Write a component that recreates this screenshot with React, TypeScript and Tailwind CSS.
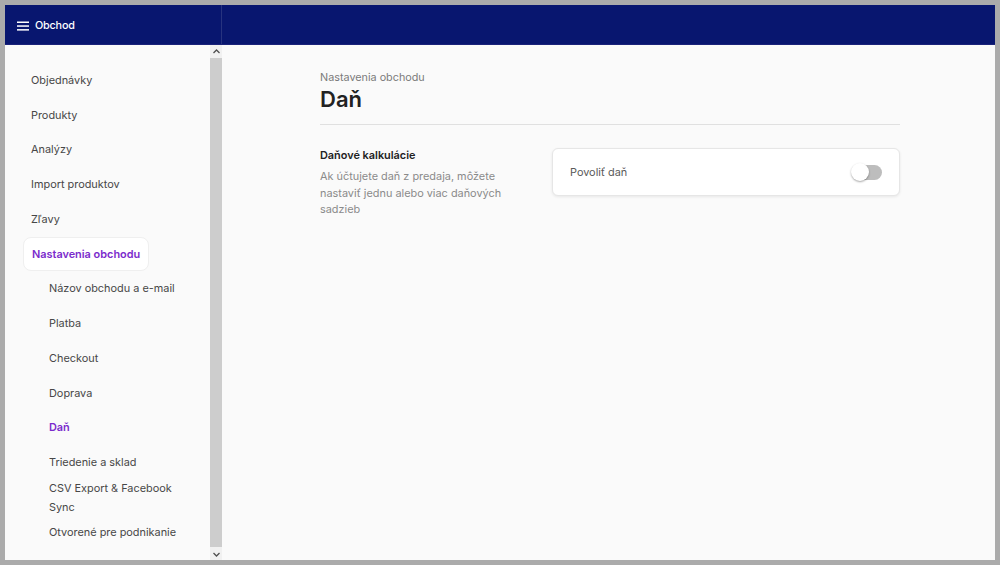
import React from "react";

const mainItems = ["Objednávky", "Produkty", "Analýzy", "Import produktov", "Zľavy"];
const subItems = [
  "Názov obchodu a e-mail",
  "Platba",
  "Checkout",
  "Doprava",
  "Daň",
  "Triedenie a sklad",
  "CSV Export & Facebook Sync",
  "Otvorené pre podnikanie",
];

export default function App() {
  return (
    <div
      className="w-[1000px] h-[565px] bg-[#ababab] p-[5px] overflow-hidden"
      style={{ fontFamily: "Inter, 'Noto Sans', sans-serif" }}
    >
      <div className="flex flex-col h-full bg-[#fafafa]">
        {/* header */}
        <div className="flex h-[40px] bg-[#08166f] border-b border-[#1b237a] shrink-0">
          <div className="w-[217px] border-r border-[#27337f] flex items-center pl-[12px] pt-[3px] gap-[6px]">
            <svg width="12" height="10" viewBox="0 0 12 10" className="text-white">
              <rect x="0" y="0.5" width="12" height="1.5" fill="currentColor" />
              <rect x="0" y="4.3" width="12" height="1.5" fill="currentColor" />
              <rect x="0" y="8.1" width="12" height="1.5" fill="currentColor" />
            </svg>
            <span className="text-white text-[10.8px] font-medium tracking-[-0.2px]">Obchod</span>
          </div>
          <div className="flex-1" />
        </div>

        {/* body */}
        <div className="flex flex-1 min-h-0">
          {/* sidebar */}
          <div className="w-[205px] pt-[17.6px] pl-[18px] text-[10.9px] text-[#474747]">
            {mainItems.map((t) => (
              <div key={t} className="h-[34.8px] flex items-center px-[8px]">
                {t}
              </div>
            ))}
            <div className="h-[34.8px] flex items-center">
              <div className="h-[34px] flex items-center px-[8px] bg-white rounded-[8px] border border-[#efefef] text-[#7b2bcc] font-semibold">
                Nastavenia obchodu
              </div>
            </div>
            {subItems.map((t) => (
              <div
                key={t}
                className={
                  "h-[34.8px] flex items-center pl-[26px] pr-[20px] leading-[19px] " +
                  (t === "Daň" ? "text-[#7b2bcc] font-semibold" : "")
                }
              >
                <span>{t}</span>
              </div>
            ))}
          </div>

          {/* scrollbar */}
          <div className="w-[12px] flex flex-col bg-[#f1f1f1]">
            <div className="h-[12px] flex items-center justify-center">
              <svg width="7" height="5" viewBox="0 0 7 5">
                <path d="M0.5 4 L3.5 1 L6.5 4" stroke="#505050" strokeWidth="1.3" fill="none" />
              </svg>
            </div>
            <div className="flex-1 bg-[#cdcdcd] my-[1px]" />
            <div className="h-[12px] flex items-center justify-center">
              <svg width="7" height="5" viewBox="0 0 7 5">
                <path d="M0.5 1 L3.5 4 L6.5 1" stroke="#505050" strokeWidth="1.3" fill="none" />
              </svg>
            </div>
          </div>

          {/* main */}
          <div className="flex-1 pl-[98px] pt-[25px]">
            <div className="w-[580px]">
              <div className="text-[10.8px] leading-[16px] text-[#7a7a7a]">Nastavenia obchodu</div>
              <div className="text-[22px] leading-[28px] font-semibold text-[#222] -mt-[1px]">Daň</div>
              <div className="mt-[11px] border-t border-[#e0e0e0]" />
              <div className="flex gap-[32px] mt-[22px]">
                <div className="w-[200px]">
                  <div className="text-[10.9px] leading-[16px] font-semibold text-[#222]">
                    Daňové kalkulácie
                  </div>
                  <div className="mt-[5px] text-[10.9px] leading-[16.5px] text-[#8a8a8a] pr-[8px]">
                    Ak účtujete daň z predaja, môžete nastaviť jednu alebo viac daňových sadzieb
                  </div>
                </div>
                <div className="flex-1 h-[48px] mt-[1px] bg-white rounded-[6px] border border-[#e6e6e6] shadow-[0_1px_3px_rgba(0,0,0,0.08)] flex items-center justify-between pl-[17px] pr-[17px]">
                  <span className="text-[10.9px] text-[#5a5a5a]">Povoliť daň</span>
                  <div className="relative w-[31px] h-[18px] flex items-center">
                    <div className="w-[30px] h-[15px] ml-[1px] rounded-full bg-[#bdbdbd]" />
                    <div className="absolute left-0 top-0 w-[18px] h-[18px] rounded-full bg-white shadow-[0_1px_2px_rgba(0,0,0,0.35)]" />
                  </div>
                </div>
              </div>
            </div>
          </div>
        </div>
      </div>
    </div>
  );
}
